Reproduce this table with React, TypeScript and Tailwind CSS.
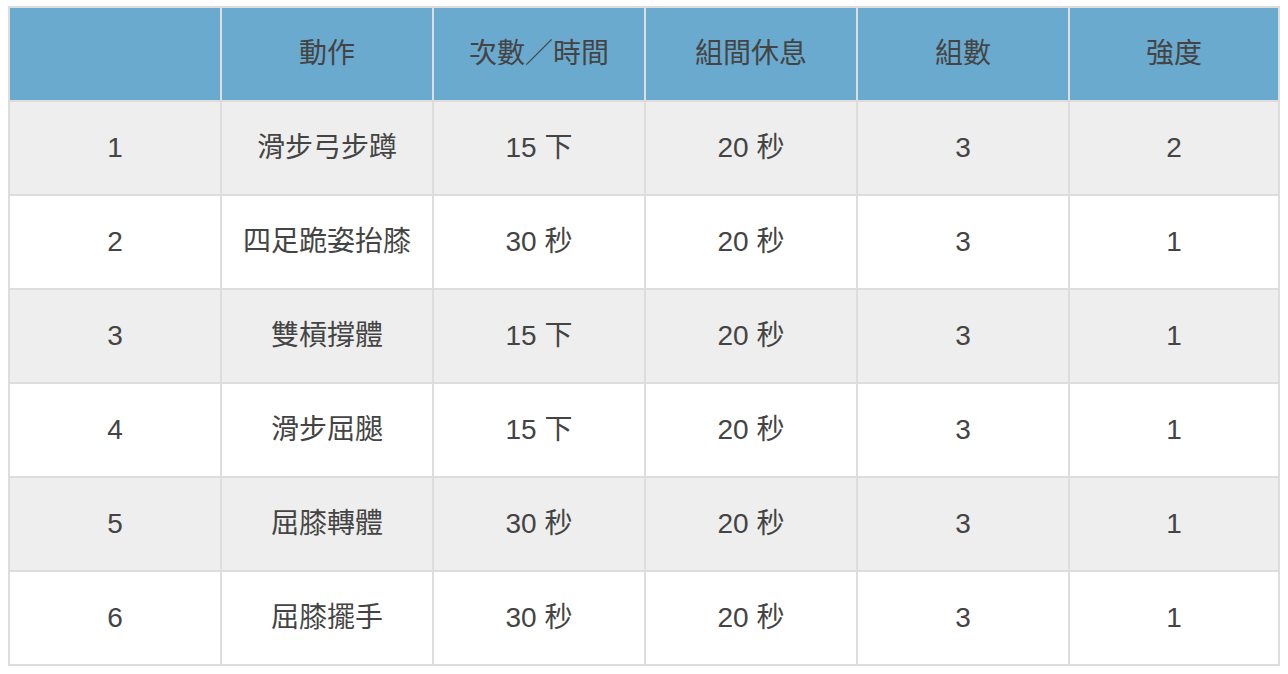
const headers = ["", "動作", "次數／時間", "組間休息", "組數", "強度"];

const rows = [
  ["1", "滑步弓步蹲", "15 下", "20 秒", "3", "2"],
  ["2", "四足跪姿抬膝", "30 秒", "20 秒", "3", "1"],
  ["3", "雙槓撐體", "15 下", "20 秒", "3", "1"],
  ["4", "滑步屈腿", "15 下", "20 秒", "3", "1"],
  ["5", "屈膝轉體", "30 秒", "20 秒", "3", "1"],
  ["6", "屈膝擺手", "30 秒", "20 秒", "3", "1"],
];

export default function App() {
  return (
    <div
      className="min-h-screen bg-white pl-2 pt-[6px] text-[#444]"
      style={{ fontFamily: '"Liberation Sans", "Noto Sans CJK TC", sans-serif' }}
    >
      <table className="w-[1272px] table-fixed border-collapse text-center text-[28px]">
        <colgroup>
          <col className="w-[212px]" />
          <col className="w-[212px]" />
          <col className="w-[212px]" />
          <col className="w-[212px]" />
          <col className="w-[212px]" />
          <col />
        </colgroup>
        <thead>
          <tr className="h-[94px] bg-[#6aaacf]">
            {headers.map((h, i) => (
              <th key={i} className="border-2 border-[#dddddd] font-normal">
                {h}
              </th>
            ))}
          </tr>
        </thead>
        <tbody>
          {rows.map((r, i) => (
            <tr key={i} className={i % 2 === 0 ? "h-[94px] bg-[#eeeeee]" : "h-[94px] bg-white"}>
              {r.map((c, j) => (
                <td key={j} className="border-2 border-[#dddddd]">
                  {c}
                </td>
              ))}
            </tr>
          ))}
        </tbody>
      </table>
    </div>
  );
}
